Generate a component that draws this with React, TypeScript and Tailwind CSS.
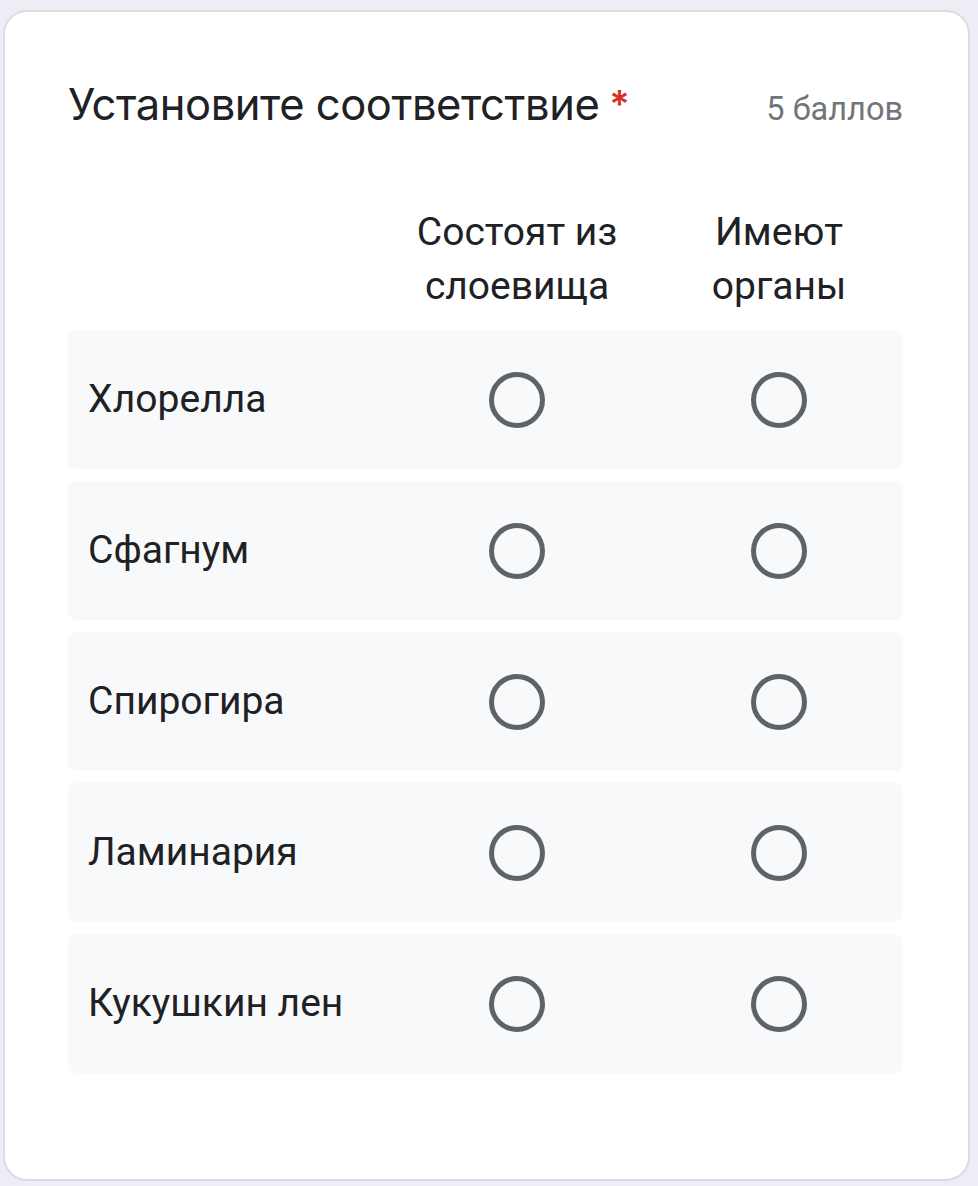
const rows = ["Хлорелла", "Сфагнум", "Спирогира", "Ламинария", "Кукушкин лен"];

function Radio() {
  return <div className="w-[56px] h-[56px] rounded-full border-[5px] border-[#5f6368]" />;
}

export default function App() {
  return (
    <div className="min-h-[1186px] bg-[#eeedf6] pt-[10px] pl-[3px] pr-[8px]">
      <div className="h-[1171px] bg-white border-2 border-[#dcdbe3] rounded-[24px] pl-[63px] pr-[65px] pt-[62px] font-['Roboto',sans-serif]">
        {/* Title */}
        <div className="flex items-baseline justify-between">
          <h1 className="font-['Inter',sans-serif] text-[43.5px] leading-[60px] text-[#202124] tracking-[-0.45px]">
            Установите соответствие
            <span className="inline-block align-top pt-[10px] ml-[10px] text-[#d93025] text-[38px] leading-[40px] font-semibold">*</span>
          </h1>
          <span className="text-[32.5px] leading-[60px] text-[#70757a]">5 баллов</span>
        </div>

        {/* Column headers */}
        <div className="grid grid-cols-[1fr_262px_248px] gap-x-[7px] mt-[66px] text-[39px] leading-[54px] text-[#202124] text-center">
          <div />
          <div>Состоят из<br />слоевища</div>
          <div>Имеют<br />органы</div>
        </div>

        {/* Rows */}
        <div className="flex flex-col gap-[12px] mt-[17px]">
          {rows.map((r) => (
            <div
              key={r}
              className="grid grid-cols-[1fr_262px_248px] gap-x-[7px] items-center h-[139px] bg-[#f8f9fa] rounded-[8px]"
            >
              <div className="pl-[20px] text-[39px] text-[#202124]">{r}</div>
              <div className="flex justify-center"><Radio /></div>
              <div className="flex justify-center"><Radio /></div>
            </div>
          ))}
        </div>
      </div>
    </div>
  );
}
